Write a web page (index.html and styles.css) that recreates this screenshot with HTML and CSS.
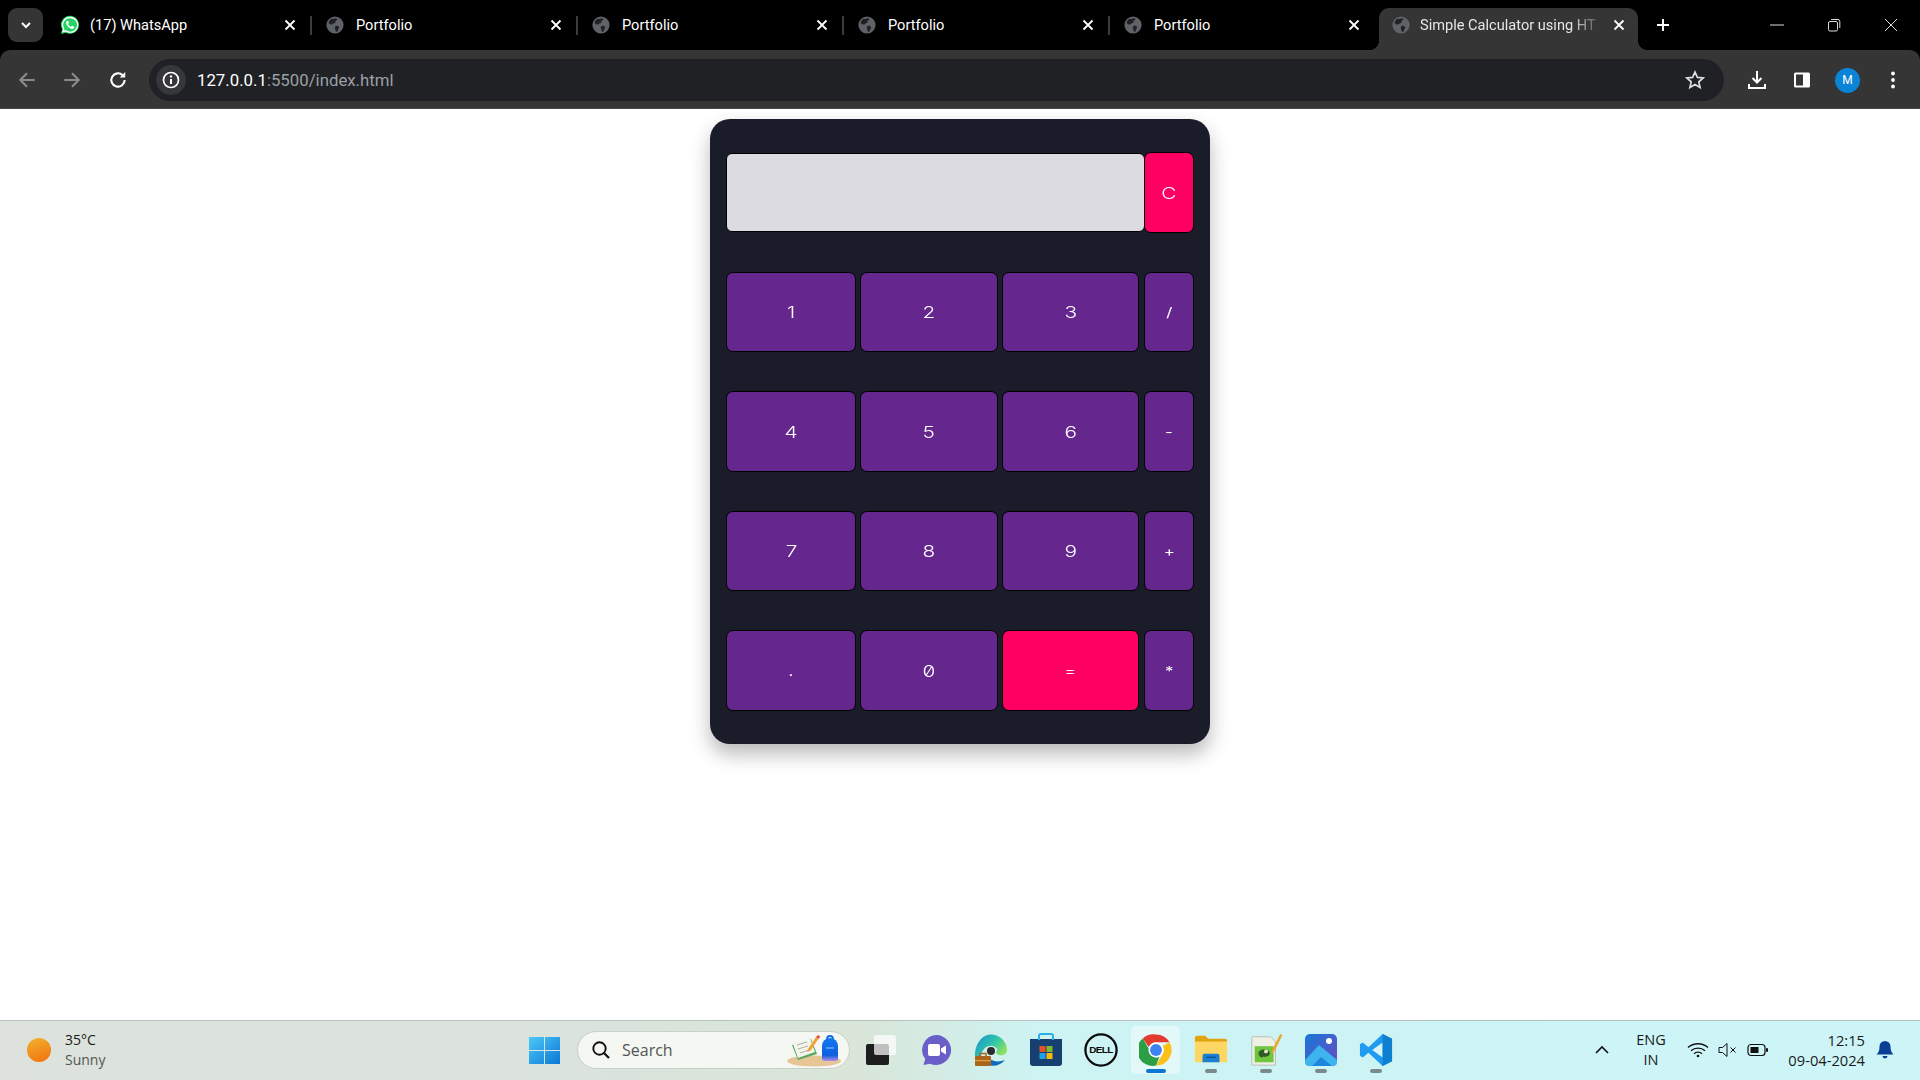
FILE: index.html
```html
<!DOCTYPE html>
<html lang="en">
<head>
<meta charset="utf-8">
<title>Simple Calculator</title>
<link rel="stylesheet" href="styles.css">
</head>
<body>
<svg class="defs" width="0" height="0" aria-hidden="true">
  <defs>
    <symbol id="globe" viewBox="0 0 18 18">
      <circle cx="9" cy="9" r="8.600" fill="#5f6266"/>
      <path d="M5.500 2.800c1.600.4 3 .2 4.200-.5l1.800.7c-.5 1-1.500 1.500-2.200 2.200.6.900.1 1.700-1.100 2-1.300.3-1.400 1.400-2.800 1.400C4.300 8.600 3.500 7.400 2.500 7c.5-1.800 1.500-3.200 3-4.200zM10 9.800c1.300-.4 2.400.2 2.900 1.100.4.800-.1 1.600-.7 2.300l-.5 2c-.7.300-1.300.5-1.900.6l-.5-2.600c-.8-.7-.7-2.800.7-3.400z" fill="#202124"/>
    </symbol>
    <symbol id="close" viewBox="0 0 12 12">
      <path d="M1.500 1.500l9 9m0-9l-9 9" stroke="#fff" stroke-width="1.800" fill="none"/>
    </symbol>
  </defs>
</svg>

<header class="chrome">
  <div class="tabstrip">
    <div class="tab-search">
      <svg class="chev" viewBox="0 0 12 12"><path d="M2 4l4 4 4-4" stroke="#fff" stroke-width="2" fill="none"/></svg>
    </div>
    <div class="tab tab-wa">
      <svg class="fav" viewBox="0 0 20 20">
        <path d="M10 .8a9 9 0 0 0-7.800 13.500L1 19l4.800-1.200A9 9 0 1 0 10 .8z" fill="#25d366"/>
        <path d="M10 2.500a7.400 7.400 0 0 0-6.300 11.300l-.7 2.700 2.800-.7A7.400 7.400 0 1 0 10 2.500z" fill="#25d366" stroke="#fff" stroke-width="1.300"/>
        <path d="M7.400 5.800c-.5 0-1.300.7-1.300 2 0 2.500 3.400 6.100 6.200 6.100 1.300 0 2-1 2-1.700 0-.5-1.700-1.400-2.100-1.400-.4 0-.8 1-1.200 1-.7 0-2.800-2-2.800-2.800 0-.4.800-.8.800-1.200 0-.5-.9-2-1.600-2z" fill="#fff"/>
      </svg>
      <span class="tab-title">(17) WhatsApp</span>
      <svg class="tab-x"><use href="#close"/></svg>
    </div>
    <div class="tab"><svg class="fav"><use href="#globe"/></svg><span class="tab-title">Portfolio</span><svg class="tab-x"><use href="#close"/></svg></div>
    <div class="tab"><svg class="fav"><use href="#globe"/></svg><span class="tab-title">Portfolio</span><svg class="tab-x"><use href="#close"/></svg></div>
    <div class="tab"><svg class="fav"><use href="#globe"/></svg><span class="tab-title">Portfolio</span><svg class="tab-x"><use href="#close"/></svg></div>
    <div class="tab tab-last"><svg class="fav"><use href="#globe"/></svg><span class="tab-title">Portfolio</span><svg class="tab-x"><use href="#close"/></svg></div>
    <div class="tab tab-active"><svg class="fav"><use href="#globe"/></svg><span class="tab-title tab-fade">Simple Calculator using HT</span><svg class="tab-x"><use href="#close"/></svg></div>
    <svg class="newtab" viewBox="0 0 14 14"><path d="M7 1v12M1 7h12" stroke="#fff" stroke-width="1.900"/></svg>
    <div class="winctl">
      <svg viewBox="0 0 14 14"><path d="M0 7h14" stroke="#ddd" stroke-width="1"/></svg>
      <svg viewBox="0 0 14 14"><rect x="1.500" y="3.500" width="9" height="9.500" rx="1.500" stroke="#ddd" fill="none"/><path d="M4 1.500h7a1.800 1.800 0 0 1 1.800 1.800V10" stroke="#ddd" fill="none"/></svg>
      <svg viewBox="0 0 14 14"><path d="M1 1l12 12M13 1L1 13" stroke="#ddd" stroke-width="1"/></svg>
    </div>
  </div>
  <div class="toolbar">
    <svg class="nav nav-first" viewBox="0 0 18 18"><path d="M16 9H3m6-6L3 9l6 6" stroke="#8a8b8d" stroke-width="1.900" fill="none"/></svg>
    <svg class="nav" viewBox="0 0 18 18"><path d="M2 9h13M9 3l6 6-6 6" stroke="#8a8b8d" stroke-width="1.900" fill="none"/></svg>
    <svg class="nav nav-reload" viewBox="0 0 18 18"><path d="M15 9a6 6 0 1 1-1.800-4.300" stroke="#fff" stroke-width="1.900" fill="none"/><path d="M15.500 1.800v5h-5z" fill="#fff"/></svg>
    <div class="omnibox">
      <div class="site-info">
        <svg viewBox="0 0 18 18"><circle cx="9" cy="9" r="7.500" stroke="#fff" stroke-width="1.700" fill="none"/><path d="M9 8v5" stroke="#fff" stroke-width="2"/><circle cx="9" cy="5.400" r="1.200" fill="#fff"/></svg>
      </div>
      <div class="url"><span class="url-host">127.0.0.1</span>:5500/index.html</div>
      <svg class="star" viewBox="0 0 20 20"><path d="M10 2l2.400 5.400 5.800.6-4.400 3.900 1.300 5.700-5.100-3-5.100 3 1.300-5.700L1.800 8l5.800-.6z" stroke="#ddd" stroke-width="1.700" fill="none"/></svg>
    </div>
    <svg class="tool tool-dl" viewBox="0 0 20 20"><path d="M10 1v11M5.500 8l4.500 4.500L14.500 8" stroke="#fff" stroke-width="2" fill="none"/><path d="M2 14v4h16v-4" stroke="#fff" stroke-width="2" fill="none"/></svg>
    <svg class="tool tool-panel" viewBox="0 0 20 20"><rect x="2" y="2.500" width="16" height="15" rx="1.500" fill="#fff"/><rect x="4" y="4.500" width="7" height="11" fill="#353535"/></svg>
    <div class="avatar">M</div>
    <svg class="tool tool-menu" viewBox="0 0 20 20"><circle cx="10" cy="3.500" r="1.900" fill="#fff"/><circle cx="10" cy="10" r="1.900" fill="#fff"/><circle cx="10" cy="16.500" r="1.900" fill="#fff"/></svg>
  </div>
</header>

<main class="page">
  <div class="calc">
    <input class="display" type="text" readonly aria-label="Result">
    <button class="key hot"><span>C</span></button>
    <button class="key c1"><span>1</span></button>
    <button class="key c2"><span>2</span></button>
    <button class="key c3"><span>3</span></button>
    <button class="key op"><span>/</span></button>
    <button class="key c1"><span>4</span></button>
    <button class="key c2"><span>5</span></button>
    <button class="key c3"><span>6</span></button>
    <button class="key op"><span>-</span></button>
    <button class="key c1"><span>7</span></button>
    <button class="key c2"><span>8</span></button>
    <button class="key c3"><span>9</span></button>
    <button class="key op"><span>+</span></button>
    <button class="key c1 op"><span>.</span></button>
    <button class="key c2"><span>0</span></button>
    <button class="key c3 hot op"><span>=</span></button>
    <button class="key op"><span>*</span></button>
  </div>
</main>

<footer class="taskbar">
  <div class="weather">
    <div class="sun"></div>
    <div class="weather-text"><div class="temp">35°C</div><div class="cond">Sunny</div></div>
  </div>
  <svg class="winlogo" viewBox="0 0 31 29">
    <defs><linearGradient id="wl" x1="0" y1="0" x2="1" y2="1"><stop offset="0" stop-color="#4dc8f8"/><stop offset="1" stop-color="#0a78d6"/></linearGradient></defs>
    <path d="M0 1h15v13H0zM16 1h15v13H16zM0 15h15v13H0zM16 15h15v13H16z" fill="url(#wl)"/>
  </svg>
  <div class="search">
    <svg class="search-ico" viewBox="0 0 20 20"><circle cx="8.500" cy="8.500" r="6.200" stroke="#111" stroke-width="1.900" fill="none"/><path d="M13 13l5 5" stroke="#111" stroke-width="2.200"/></svg>
    <span class="search-text">Search</span>
    <svg class="search-art" viewBox="0 0 62 34">
      <defs><linearGradient id="bp" x1="0" y1="0" x2="0" y2="1"><stop offset="0" stop-color="#1277f2"/><stop offset=".75" stop-color="#0e5fe0"/><stop offset="1" stop-color="#b48be8"/></linearGradient></defs>
      <ellipse cx="29" cy="28" rx="27" ry="5.500" fill="#e6c596"/>
      <path d="M7 12l19-6 6 15-19 6z" fill="#58a860"/>
      <path d="M8 11l17-6 5 14-17 6z" fill="#f3f5ec"/>
      <path d="M12 12l10-3M13 16l10-3M15 20l9-3" stroke="#a9b3a8"/>
      <path d="M23 16l8-12 2.500 1.700-8 12-3.500 1.200z" fill="#f2a23a"/>
      <path d="M31 4l2-2 2.300 1.600-1.700 2.300z" fill="#e5503c"/>
      <path d="M37 13a8 8 0 0 1 16 0v12a3 3 0 0 1-3 3H40a3 3 0 0 1-3-3z" fill="url(#bp)"/>
      <path d="M42 6c0-4 6-4 6 0" stroke="#0f6ae6" stroke-width="1.800" fill="none"/>
      <path d="M41 15h8" stroke="#5cb0f6" stroke-width="1.500"/>
    </svg>
  </div>
  <div class="apps">
    <div class="app">
      <svg viewBox="0 0 34 34"><rect x="2" y="11" width="23" height="21" rx="2" fill="#1d1d1d"/><rect x="10" y="2" width="22" height="20" rx="2" fill="#fff" fill-opacity=".72"/></svg>
    </div>
    <div class="app">
      <svg viewBox="0 0 34 34"><path d="M17 2a15 15 0 1 1-6 28.700L4.500 32l1.700-6A15 15 0 0 1 17 2z" fill="#6a5fc9"/><rect x="9" y="11" width="12" height="12" rx="2" fill="#fff"/><path d="M22 15.500l5-3v9l-5-3z" fill="#fff"/></svg>
    </div>
    <div class="app">
      <svg viewBox="0 0 34 34">
        <defs><linearGradient id="eg" x1="0" y1="0" x2="1" y2=".6"><stop offset="0" stop-color="#1a8fd8"/><stop offset=".6" stop-color="#2fc6a8"/><stop offset="1" stop-color="#8be25e"/></linearGradient></defs>
        <path d="M17 1.500a16 16 0 0 1 16 15.500c0 4-4 6-8 5-3-.7-3.500-3-1.500-5-1.500-5-9-6-13-1.500C8 18 7 21 7 24H1C.5 11 8 1.500 17 1.500z" fill="url(#eg)"/>
        <path d="M14 32c6 2 13 0 17-5-5 2-11 2-15-1z" fill="#0f6cbd"/>
        <circle cx="17" cy="18" r="4" fill="#2d2d2d"/>
        <rect x="1" y="23" width="16" height="10" rx="1" fill="#a9651b"/>
        <path d="M6 23v-2.500h6V23" stroke="#a9651b" stroke-width="1.500" fill="none"/>
        <rect x="1" y="27" width="16" height="1.200" fill="#e3a13c"/>
      </svg>
    </div>
    <div class="app">
      <svg viewBox="0 0 34 34"><path d="M1 6h32v24a3 3 0 0 1-3 3H4a3 3 0 0 1-3-3z" fill="#15406f"/><path d="M10 7V3a2 2 0 0 1 2-2h10a2 2 0 0 1 2 2v4" stroke="#28b0e8" stroke-width="2" fill="none"/><rect x="10.500" y="13" width="6" height="6" fill="#e8502a"/><rect x="17.500" y="13" width="6" height="6" fill="#82b92c"/><rect x="10.500" y="20" width="6" height="6" fill="#1ea1e8"/><rect x="17.500" y="20" width="6" height="6" fill="#f9b90d"/></svg>
    </div>
    <div class="app">
      <svg viewBox="0 0 36 36"><circle cx="18" cy="18" r="16.500" fill="none" stroke="#0a0a0a" stroke-width="2.400"/><text class="dell" x="18" y="21.500" text-anchor="middle">DELL</text></svg>
    </div>
    <div class="app app-active">
      <svg viewBox="0 0 36 36">
        <path d="M18 1.500a16.500 16.500 0 0 1 14.300 8.250H18a8.250 8.250 0 0 0-7.600 5L4 5.700A16.500 16.500 0 0 1 18 1.500z" fill="#e33b2e"/>
        <path d="M32.300 9.750A16.500 16.500 0 0 1 18 34.500l7.100-12.300A8.250 8.250 0 0 0 25 13.800z" fill="#fbc116"/>
        <path d="M18 34.500A16.500 16.500 0 0 1 4 5.700l7.100 12.300a8.250 8.250 0 0 0 10.500 7.500z" fill="#2c9f45"/>
        <circle cx="18" cy="18" r="8" fill="#fff"/><circle cx="18" cy="18" r="6.300" fill="#3f82f2"/>
      </svg>
    </div>
    <div class="app app-run">
      <svg viewBox="0 0 36 36"><path d="M1 5a2 2 0 0 1 2-2h9l3 3h18a2 2 0 0 1 2 2v3H1z" fill="#e2a40e"/><path d="M1 9h34v21a1 1 0 0 1-1 1H2a1 1 0 0 1-1-1z" fill="#fdd663"/><path d="M9 24a2 2 0 0 1 2-2h14a2 2 0 0 1 2 2v7H9z" fill="#1b7fd4"/><rect x="13" y="25" width="10" height="1.400" fill="#0a4e94"/></svg>
    </div>
    <div class="app app-run">
      <svg viewBox="0 0 36 36"><path d="M3 4h20l5 5v25H3z" fill="#eef0e4" stroke="#b8bdb0"/><rect x="6" y="14" width="20" height="17" fill="#6fc53c"/><path d="M10 22c0-6 11-6 12-1 .5 3-3 5-7 4-1 2-4 1-5-3z" fill="#2e5a25"/><circle cx="18" cy="19.500" r="2" fill="#e8e8d0"/><path d="M24 19L33 1l2.500 1.200-9 18-3 1.500z" fill="#eca72c"/></svg>
    </div>
    <div class="app app-run">
      <svg viewBox="0 0 34 34">
        <defs><linearGradient id="ph" x1="0" y1="0" x2="1" y2="1"><stop offset="0" stop-color="#1678d8"/><stop offset="1" stop-color="#6d4bc0"/></linearGradient></defs>
        <rect x="1" y="1" width="32" height="32" rx="5" fill="url(#ph)"/><circle cx="25" cy="8" r="3" fill="#fff"/>
        <path d="M1 27l14-15 18 15v2a4 4 0 0 1-4 4H5a4 4 0 0 1-4-4z" fill="#3db4ee"/><path d="M8 33l9-9 11 9z" fill="#1e86df"/>
      </svg>
    </div>
    <div class="app app-run">
      <svg viewBox="0 0 36 36"><path d="M25 1l10 5v24l-10 5-15-14-6 5-3-2v-12l3-2 6 5z" fill="#1f9cf0"/><path d="M25 10L14 18l11 8z" fill="#d4f4f8"/><path d="M25 1l10 5v24l-10 5z" fill="#0f7fd0"/></svg>
    </div>
  </div>
  <div class="tray">
    <svg class="tray-chev" viewBox="0 0 16 10"><path d="M2 8l6-6 6 6" stroke="#111" stroke-width="1.600" fill="none"/></svg>
    <div class="lang"><div>ENG</div><div>IN</div></div>
    <svg class="wifi" viewBox="0 0 22 16"><path d="M1 5.500c5.500-5 14.500-5 20 0M4 8.700c3.800-3.400 10.200-3.400 14 0M7 11.700c2.200-2 5.800-2 8 0" stroke="#111" stroke-width="1.300" fill="none"/><circle cx="11" cy="14" r="1.300" fill="#111"/></svg>
    <svg class="mute" viewBox="0 0 20 16"><path d="M1 5.500h3.500L9 1.500v13l-4.500-4H1z" stroke="#111" fill="none"/><path d="M12.500 5.500l5 5m0-5l-5 5" stroke="#111"/></svg>
    <svg class="battery" viewBox="0 0 22 14"><rect x="1" y="1.500" width="17" height="11" rx="3" stroke="#111" stroke-width="1.200" fill="none"/><rect x="3.500" y="4" width="8" height="6" fill="#111"/><rect x="19" y="5" width="2" height="4" rx="1" fill="#111"/></svg>
    <div class="clock"><div>12:15</div><div>09-04-2024</div></div>
    <svg class="bell" viewBox="0 0 18 20"><path d="M9 1a5.500 5.500 0 0 1 5.500 5.500c0 4 1 6 3 8H.5c2-2 3-4 3-8A5.500 5.500 0 0 1 9 1z" fill="#0b3f96"/><path d="M6.500 16h5a2.500 2.500 0 0 1-5 0z" fill="#0b3f96"/></svg>
  </div>
</footer>
</body>
</html>
```

FILE: styles.css
```css
* { box-sizing: border-box; }
html, body { height: 100%; }
body {
  margin: 0;
  height: 1080px;
  overflow: hidden;
  display: flex;
  flex-direction: column;
  background: #fff;
  font-family: Roboto, "Liberation Sans", sans-serif;
}
.defs { position: absolute; }

/* Browser chrome */
.chrome { background: #000; flex: none; }
.tabstrip { height: 50px; display: flex; align-items: flex-end; }
.tab-search {
  width: 35px; height: 34px; margin: 0 3px 8px 8px;
  background: #353535; border-radius: 9px;
  display: flex; align-items: center; justify-content: center;
}
.chev { width: 12px; height: 12px; }
.tab {
  width: 266px; height: 42px;
  display: flex; align-items: center;
  padding: 0 16px 9px 14px;
  position: relative;
  color: #fff; font-size: 14.600px;
}
.tab::after {
  content: ""; position: absolute; right: 0; top: 8px;
  width: 2px; height: 19px; background: #3c3c3c;
}
.tab-last::after { display: none; }
.tab-last { width: 269px; padding-right: 19px; }
.fav { width: 18px; height: 18px; flex: none; }
.tab-wa .fav { width: 20px; height: 20px; }
.tab-wa .tab-title { margin-left: 10px; }
.tab-title { flex: 1; margin-left: 12px; white-space: nowrap; }
.tab-x { width: 12px; height: 12px; flex: none; margin-left: 8px; }
.tab-active {
  width: 259px; background: #353535; border-radius: 10px 10px 0 0;
  padding: 0 13px 9px 13px; color: #e6e6e6;
}
.tab-fade {
  margin-left: 10px;
  -webkit-mask-image: linear-gradient(90deg, #000 150px, rgba(0, 0, 0, .25) 176px);
          mask-image: linear-gradient(90deg, #000 150px, rgba(0, 0, 0, .25) 176px);
}
.tab-active::before, .tab-active::after {
  content: ""; display: block; position: absolute; bottom: 0; top: auto;
  width: 10px; height: 10px;
  background: radial-gradient(circle at var(--c) 0, transparent 10px, #353535 10.500px);
}
.tab-active::before { left: -10px; --c: 0; }
.tab-active::after { right: -10px; left: auto; --c: 100%; }
.newtab { width: 14px; height: 14px; margin: 0 0 18px 18px; flex: none; }
.winctl { margin-left: auto; display: flex; gap: 43px; padding-right: 22px; margin-bottom: 18px; }
.winctl svg { width: 14px; height: 14px; }

.toolbar {
  height: 59px; padding-top: 2px; background: #353535;
  border-radius: 10px 10px 0 0;
  display: flex; align-items: center;
  border-bottom: 1px solid #4a4a4a;
}
.nav { width: 20px; height: 20px; flex: none; margin-left: 25px; }
.nav-first { margin-left: 17px; }
.nav-reload { margin-left: 26px; }
.omnibox {
  width: 1575px; height: 42px; margin-left: 21px;
  background: #202124; border-radius: 21px;
  display: flex; align-items: center;
  padding: 0 19px 0 7px;
}
.site-info {
  width: 30px; height: 30px; border-radius: 50%; background: #36373a;
  display: flex; align-items: center; justify-content: center; flex: none;
}
.site-info svg { width: 18px; height: 18px; }
.url { margin-left: 11px; flex: 1; color: #9aa0a6; font-size: 16.800px; white-space: nowrap; }
.url-host { color: #fff; }
.star { width: 20px; height: 20px; flex: none; }
.tool { width: 20px; height: 20px; flex: none; }
.tool-dl { margin-left: 23px; }
.tool-panel { margin-left: 25px; }
.avatar {
  width: 25px; height: 25px; margin-left: 23px; border-radius: 50%;
  background: #0a84d6; color: #fff; font-size: 12px;
  display: flex; align-items: center; justify-content: center; flex: none;
}
.tool-menu { margin-left: 23px; }

/* Page */
.page { flex: 1; display: flex; justify-content: center; align-items: flex-start; padding-top: 10px; min-height: 0; }
.calc {
  width: 500px; height: 625px;
  background: #1a1c2a; border-radius: 20px;
  box-shadow: 0 10px 20px rgba(0, 0, 0, .28);
  padding: 33px 16px 33px 16px;
  display: grid;
  grid-template-columns: 134px 142px 142px 50px;
  grid-template-rows: 81px 80px 81px 80px 81px;
  row-gap: 39px;
}
.display {
  grid-column: 1 / span 3;
  height: 79px; align-self: center;
  margin-right: -1px;
  background: #dcdbe1; border: 1px solid #000; border-radius: 6px;
  padding: 0; outline: none;
}
.key {
  padding: 0; margin: 0;
  background: #65278d; color: #fff;
  border: 1px solid #000; border-radius: 7px;
  font: 300 16px Inter, "Liberation Sans", sans-serif;
  font-feature-settings: "zero";
  display: flex; align-items: center; justify-content: center;
  position: relative;
}
.key span { display: inline-block; transform: scaleX(1.300); }
.key.op { font-size: 13px; font-weight: 400; }
.key.hot { background: #ff0062; }
.c1 { margin-right: 4px; }
.c2 { margin-right: 4px; }
.c3 { margin-right: 5px; }

/* Taskbar */
.taskbar {
  height: 60px; flex: none;
  border-top: 1px solid #b6c2bf;
  padding-bottom: 1px;
  background: linear-gradient(90deg, #dde3dc 0, #dae3dc 30%, #d9e6d9 45%, #cdf3f3 54%, #cdf5f8 100%);
  display: flex; align-items: center;
  color: #1a1a1a;
}
.weather { width: 529px; display: flex; align-items: center; padding-left: 27px; flex: none; }
.sun { width: 24px; height: 24px; border-radius: 50%; background: linear-gradient(160deg, #f2b32c, #f2700f); flex: none; }
.weather-text { margin-left: 14px; font: 14px/20px "Open Sans", sans-serif; }
.temp { color: #1a1a1a; }
.cond { color: #555; }
.winlogo { width: 31px; height: 29px; flex: none; }
.search {
  width: 273px; height: 38px; margin-left: 17px; flex: none;
  background: #f4f7f2; border: 1px solid #c9cfca; border-radius: 19px;
  display: flex; align-items: center;
  padding-left: 13px;
}
.search-ico { width: 20px; height: 20px; flex: none; }
.search-text { margin-left: 11px; flex: 1; font: 16px "Open Sans", sans-serif; color: #555; }
.search-art { width: 62px; height: 34px; flex: none; margin-right: 2px; }
.apps { display: flex; margin-left: 3px; flex: none; }
.app {
  width: 55px; height: 48px; flex: none; position: relative;
  display: flex; align-items: center; justify-content: center;
}
.app svg { width: 34px; height: 34px; }
.dell { font: 700 10.500px "Liberation Sans", sans-serif; letter-spacing: -.6px; fill: #0a0a0a; }
.app-active::before {
  content: ""; position: absolute; left: 3px; right: 3px; top: 0; bottom: 0;
  background: rgba(255, 255, 255, .45); border-radius: 5px;
}
.app-active svg { position: relative; }
.app-active::after, .app-run::after {
  content: ""; position: absolute; bottom: 1px; left: 50%;
  transform: translateX(-50%);
  width: 12px; height: 4px; border-radius: 2px; background: #7a8a8c;
}
.app-active::after { width: 20px; background: #0b78d4; }
.tray { flex: 1; display: flex; align-items: center; min-width: 0; }
.tray-chev { width: 16px; height: 10px; margin-left: 191px; flex: none; }
.lang { width: 40px; margin-left: 21px; text-align: center; font: 14.500px/20px "Open Sans", sans-serif; flex: none; }
.wifi { width: 22px; height: 16px; margin-left: 16px; flex: none; }
.mute { width: 20px; height: 16px; margin-left: 9px; flex: none; }
.battery { width: 22px; height: 14px; margin-left: 9px; flex: none; }
.clock { width: 92px; margin-left: 4px; text-align: right; font: 14.700px/20px "Open Sans", sans-serif; flex: none; white-space: nowrap; }
.bell { width: 18px; height: 20px; margin-left: 11px; flex: none; }
```
